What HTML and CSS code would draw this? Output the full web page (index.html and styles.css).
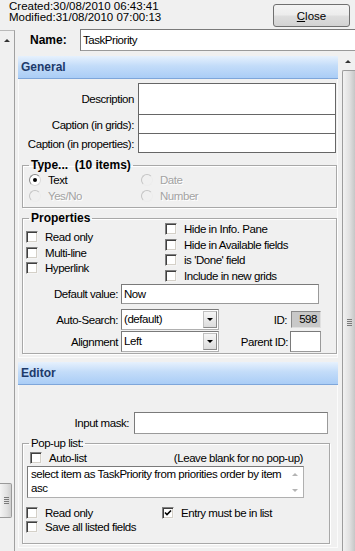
FILE: index.html
```html
<!DOCTYPE html>
<html>
<head>
    <title>Field Properties</title>
    <link rel="stylesheet" href="styles.css">
</head>
<body>
    <div class="top">
        <div class="stamps">
            <div>Created:30/08/2010 06:43:41</div>
            <div>Modified:31/08/2010 07:00:13</div>
        </div>
        <button class="close"><u>C</u>lose</button>
    </div>

    <div class="frame">
        <!-- left scrollbar (partly visible) -->
        <div class="lscroll">
            <div class="sb-btn"><span class="tri-up"></span></div>
            <div class="sb-space"></div>
            <div class="lthumb"><span class="grip"></span></div>
            <div class="lbottom"></div>
        </div>

        <div class="main">
            <div class="namerow">
                <span class="name-label">Name:</span>
                <div class="edit name-edit">TaskPriority</div>
            </div>

            <div class="work">
                <div class="panels">
                    <div class="panel">
                        <div class="head">General</div>
                        <div class="pbody general">
                            <div class="captions">
                                <span class="lbl">Description</span><div class="box desc"></div>
                                <span class="lbl">Caption (in grids):</span><div class="box"></div>
                                <span class="lbl">Caption (in properties):</span><div class="box"></div>
                            </div>

                            <fieldset class="group type">
                                <legend>Type...&nbsp; (10 items)</legend>
                                <div class="radios">
                                    <div class="opt"><span class="radio on"></span>Text</div>
                                    <div class="opt off"><span class="radio"></span>Date</div>
                                    <div class="opt off"><span class="radio"></span>Yes/No</div>
                                    <div class="opt off"><span class="radio"></span>Number</div>
                                </div>
                            </fieldset>

                            <fieldset class="group props">
                                <legend>Properties</legend>
                                <div class="checks">
                                    <div class="ccol left">
                                        <div class="chk"><span class="cb"></span>Read only</div>
                                        <div class="chk"><span class="cb"></span>Multi-line</div>
                                        <div class="chk"><span class="cb"></span>Hyperlink</div>
                                    </div>
                                    <div class="ccol right">
                                        <div class="chk"><span class="cb"></span>Hide in Info. Pane</div>
                                        <div class="chk"><span class="cb"></span>Hide in Available fields</div>
                                        <div class="chk"><span class="cb"></span>is 'Done' field</div>
                                        <div class="chk"><span class="cb"></span>Include in new grids</div>
                                    </div>
                                </div>
                                <div class="frow r-default">
                                    <span class="flbl">Default value:</span>
                                    <div class="edit dv">Now</div>
                                </div>
                                <div class="frow r-search">
                                    <span class="flbl">Auto-Search:</span>
                                    <div class="combo"><span class="ctext">(default)</span><span class="drop"><span class="tri-down"></span></span></div>
                                    <span class="idlbl">ID:</span>
                                    <div class="idbox">598</div>
                                </div>
                                <div class="frow r-align">
                                    <span class="flbl">Alignment</span>
                                    <div class="combo"><span class="ctext">Left</span><span class="drop"><span class="tri-down"></span></span></div>
                                    <span class="idlbl pid">Parent ID:</span>
                                    <div class="edit pidbox"></div>
                                </div>
                            </fieldset>
                        </div>
                    </div>

                    <div class="panel editor">
                        <div class="head">Editor</div>
                        <div class="pbody">
                            <div class="frow mask">
                                <span class="flbl">Input mask:</span>
                                <div class="edit maskbox"></div>
                            </div>

                            <fieldset class="group popup">
                                <legend>Pop-up list:</legend>
                                <div class="autorow">
                                    <div class="chk"><span class="cb"></span>Auto-list</div>
                                    <span class="hint">(Leave blank for no pop-up)</span>
                                </div>
                                <div class="memo">
                                    <div class="memo-text">select item as TaskPriority from priorities order by item asc</div>
                                    <div class="memo-sb">
                                        <span class="tri-up light"></span>
                                        <span class="tri-down light"></span>
                                    </div>
                                </div>
                                <div class="checks popchk">
                                    <div class="ccol">
                                        <div class="chk"><span class="cb"></span>Read only</div>
                                        <div class="chk"><span class="cb"></span>Save all listed fields</div>
                                    </div>
                                    <div class="ccol">
                                        <div class="chk"><span class="cb ticked"><svg width="8" height="8" viewBox="0 0 8 8"><polyline points="1,3.5 3,5.5 7,1.5" fill="none" stroke="#000" stroke-width="1.6"/></svg></span>Entry must be in list</div>
                                    </div>
                                </div>
                            </fieldset>
                        </div>
                    </div>
                </div>

                <!-- right scrollbar -->
                <div class="rscroll">
                    <div class="sb-btn rbtn"><span class="tri-up"></span></div>
                    <div class="rthumb"><span class="grip"></span></div>
                </div>
            </div>
        </div>
    </div>
</body>
</html>
```

FILE: styles.css
```css
* {
    box-sizing: border-box;
}
body {
    margin: 0;
    height: 551px;
    overflow: hidden;
    background: #f0f0f0;
    font-family: "Liberation Sans", Arial, sans-serif;
    font-size: 11.5px;
    letter-spacing: -0.45px;
    color: #000;
}

/* top strip */
.top {
    display: flex;
    justify-content: space-between;
    height: 29px;
}
.stamps {
    padding: 1px 0 0 9px;
    font-size: 11.5px;
    letter-spacing: 0;
    line-height: 11px;
}
.close {
    width: 77px;
    height: 23px;
    margin: 4px 5px 0 0;
    padding: 0;
    font: inherit;
    letter-spacing: 0;
    color: #000;
    border: 1px solid #707070;
    border-radius: 3px;
    background: linear-gradient(#f4f4f4, #ececec 48%, #dedede 52%, #d2d2d2);
}

.frame {
    display: flex;
    height: 522px;
}

/* scrollbars */
.lscroll {
    width: 15px;
    margin-top: 1px;
    border-top: 1px solid #b9b9b9;
    border-right: 1px solid #a0a0a0;
    display: flex;
    flex-direction: column;
}
.sb-btn {
    height: 19px;
    display: flex;
    align-items: center;
    justify-content: center;
}
.tri-up {
    width: 0;
    height: 0;
    border-left: 3px solid transparent;
    border-right: 3px solid transparent;
    border-bottom: 3px solid #333;
}
.tri-down {
    width: 0;
    height: 0;
    border-left: 3px solid transparent;
    border-right: 3px solid transparent;
    border-top: 3px solid #000;
}
.tri-up.light {
    border-bottom-color: #b4b4b4;
}
.tri-down.light {
    border-top-color: #b4b4b4;
}
.sb-space {
    flex: 1;
}
.lthumb {
    height: 35px;
    margin-right: 2px;
    border: 1px solid #9a9a9a;
    border-left: none;
    border-radius: 0 2px 2px 0;
    background: linear-gradient(to right, #f4f4f4, #e2e2e2 60%, #cfcfcf);
    display: flex;
    align-items: center;
    justify-content: flex-end;
    padding-right: 2px;
}
.grip {
    width: 5px;
    height: 7px;
    background: repeating-linear-gradient(#7a7a7a 0 1px, transparent 1px 2px);
}
.lbottom {
    height: 33px;
}
.rscroll {
    width: 14px;
    margin-left: 3px;
    display: flex;
    flex-direction: column;
}
.rbtn {
    padding-top: 2px;
}
.rthumb {
    flex: none;
    height: 504px;
    margin-left: 1px;
    border-left: 1px solid #9c9c9c;
    border-top: 1px solid #9c9c9c;
    border-top-left-radius: 2px;
    background: linear-gradient(to right, #f2f2f2, #e0e0e0 55%, #c6c6c6);
    display: flex;
    align-items: center;
    justify-content: center;
}

/* main area */
.main {
    flex: 1;
    display: flex;
    flex-direction: column;
}
.namerow {
    display: flex;
    height: 22px;
}
.name-label {
    width: 65px;
    padding-left: 15px;
    font-weight: bold;
    font-size: 12px;
    letter-spacing: 0;
    line-height: 22px;
}
.edit {
    background: #fff;
    border: 1px solid #9a9a9a;
    border-top-color: #7a7a7a;
    border-left-color: #7a7a7a;
}
.name-edit {
    flex: 1;
    height: 22px;
    margin-right: -3px;
    padding-left: 2px;
    line-height: 20px;
}
.work {
    display: flex;
    flex: 1;
}
.panels {
    width: 320px;
    margin-left: 3px;
    margin-top: 5px;
}
.panel.editor {
    margin-top: 4px;
}
.head {
    height: 23px;
    padding-left: 3px;
    border-bottom: 1px solid #7ea6da;
    background: linear-gradient(#e6f1fd, #c3dcf9 45%, #aacdf6);
    color: #1d3a6a;
    font-weight: bold;
    font-size: 12px;
    letter-spacing: 0;
    line-height: 22px;
}
.pbody {
    border: 1px solid #fbfbfb;
    border-top: none;
    padding-bottom: 3px;
}
.general {
    padding-top: 4px;
}

.captions {
    display: grid;
    grid-template-columns: 115px 198px;
    column-gap: 4px;
}
.lbl {
    text-align: right;
    align-self: center;
}
.box {
    height: 20px;
    margin-top: -1px;
    background: #fff;
    border: 1px solid #666;
}
.box.desc {
    height: 32px;
    margin-top: 0;
}

/* group boxes */
.group {
    margin: 5px 0 0 3px;
    padding: 0;
    min-width: 0;
    border: 1px solid #a8a8a8;
    box-shadow: inset 1px 1px 0 #fff, 1px 1px 0 #fff;
}
.group legend {
    margin-left: 6px;
    padding: 0 2px;
    font-weight: bold;
    font-size: 12px;
    letter-spacing: 0;
    line-height: 14px;
}
.group.props {
    margin-top: 3px;
    padding-bottom: 1px;
}
.group.popup {
    margin: 3px 7px 0 3px;
}
.group.popup legend {
    font-weight: normal;
    font-size: 11.5px;
    letter-spacing: -0.45px;
    line-height: 13px;
}

.radios {
    display: grid;
    grid-template-columns: 112px auto;
    padding: 0 0 3px 6px;
}
.opt {
    display: flex;
    align-items: center;
    gap: 7px;
    height: 16px;
}
.opt.off {
    color: #a3a3a3;
    text-shadow: 1px 1px 0 #fff;
}
.radio {
    width: 12px;
    height: 12px;
    border-radius: 50%;
    border: 1px solid #8a8a8a;
    border-right-color: #d8d8d8;
    border-bottom-color: #d8d8d8;
    background: #fff;
    display: flex;
    align-items: center;
    justify-content: center;
}
.radio.on::after {
    content: "";
    width: 4px;
    height: 4px;
    border-radius: 50%;
    background: #000;
}
.off .radio {
    background: #f0f0f0;
    border-color: #c4c4c4 #ececec #ececec #c4c4c4;
}

/* check boxes */
.checks {
    display: flex;
    height: 59px;
    padding-left: 3px;
}
.ccol.left {
    width: 139px;
    padding-top: 6px;
}
.ccol.right {
    margin-top: -2px;
}
.chk {
    display: flex;
    gap: 7px;
    height: 15.5px;
    line-height: 12px;
}
.cb {
    width: 12px;
    height: 12px;
    flex: none;
    background: #fff;
    border: 1px solid #808080;
    border-right-color: #f4f4f4;
    border-bottom-color: #f4f4f4;
    box-shadow: inset 1px 1px 0 #404040, inset -1px -1px 0 #d4d0c8;
    display: flex;
    align-items: center;
    justify-content: center;
}

/* label + control rows */
.frow {
    display: flex;
    align-items: center;
}
.flbl {
    width: 95px;
    margin-right: 3px;
    text-align: right;
}
.r-default {
    height: 20px;
}
.edit.dv {
    width: 198px;
    height: 20px;
    padding-left: 2px;
    line-height: 18px;
}
.r-search {
    height: 21px;
    margin-top: 5px;
}
.r-align {
    height: 21px;
    margin-top: 1px;
}
.combo {
    width: 98px;
    height: 21px;
    display: flex;
    background: #fff;
    border: 1px solid #7a7a7a;
    border-right-color: #b0b0b0;
    border-bottom-color: #b0b0b0;
}
.ctext {
    flex: 1;
    padding-left: 2px;
    line-height: 18px;
}
.drop {
    width: 14px;
    margin: 1px 1px 1px 0;
    background: linear-gradient(#f6f6f6, #dcdcdc);
    border: 1px solid #c0c0c0;
    border-right-color: #8a8a8a;
    border-bottom-color: #8a8a8a;
    display: flex;
    align-items: center;
    justify-content: center;
}
.idlbl {
    flex: 1;
    text-align: right;
    margin-right: 4px;
}
.idlbl.pid {
    margin-right: 2px;
}
.idbox {
    width: 30px;
    height: 17px;
    margin-right: 15px;
    padding-right: 3px;
    background: #c8c8c8;
    border: 1px solid #8a8a8a;
    border-right-color: #e0e0e0;
    border-bottom-color: #e0e0e0;
    text-align: right;
    line-height: 15px;
}
.pidbox {
    width: 31px;
    height: 21px;
    margin-right: 15px;
}

/* editor section */
.editor .pbody {
    padding-top: 27px;
}
.mask .flbl {
    width: 110px;
    margin-right: 5px;
}
.maskbox {
    width: 194px;
    height: 22px;
}
.autorow {
    display: flex;
    height: 14px;
    padding: 2px 0 0 7px;
}
.autorow .chk {
    height: 12px;
}
.hint {
    margin-left: auto;
    margin-right: 26px;
    line-height: 12px;
}
.memo {
    display: flex;
    width: 277px;
    height: 32px;
    margin: 2px 0 0 4px;
    background: #fff;
    border: 1px solid #7a7a7a;
    border-right-color: #b0b0b0;
    border-bottom-color: #b0b0b0;
}
.memo-text {
    flex: 1;
    padding: 0 0 0 3px;
    line-height: 14px;
}
.memo-sb {
    width: 16px;
    display: flex;
    flex-direction: column;
    justify-content: space-between;
    align-items: center;
    padding: 6px 0 5px;
}
.popchk {
    height: auto;
    margin-top: 9px;
    padding-bottom: 8px;
}
.popchk .ccol:first-child {
    width: 136px;
}
.popchk .chk {
    height: 14px;
}
```
